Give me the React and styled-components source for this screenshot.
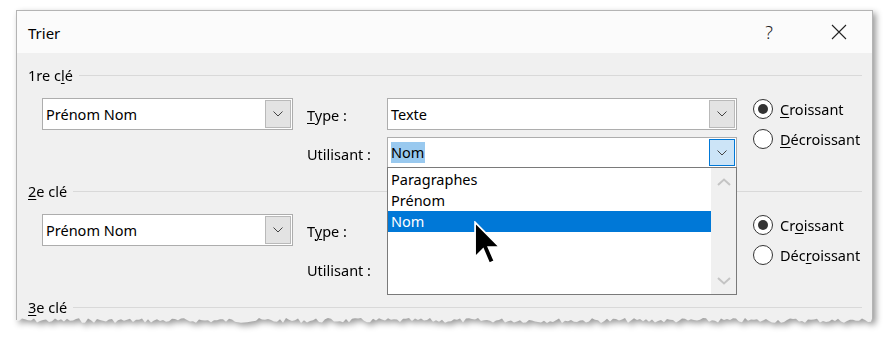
import React from 'react';
import styled, { createGlobalStyle } from 'styled-components';

const GlobalStyle = createGlobalStyle`
	body {
		margin: 0;
		background: #ffffff;
		font-family: 'Noto Sans', 'Open Sans', sans-serif;
		color: #000;
	}
`;

const Page = styled.div`
	padding: 10px 0 0 16px;
	height: 330px;
	overflow: hidden;
`;

const Dialog = styled.div`
	width: 857px;
	filter: drop-shadow(3px 3px 3px rgba(0, 0, 0, 0.4));
`;

const Frame = styled.div`
	border: 1px solid #b4b4b4;
	border-bottom: none;
	background: #f0f0f0;
`;

const TitleBar = styled.div`
	height: 42px;
	background: #fbfbfb;
	display: flex;
	align-items: center;
	padding: 0 25px 0 11px;
	font-size: 15px;
`;

const Title = styled.div`
	flex: 1;
	padding-top: 1px;
`;

const Help = styled.div`
	font-size: 18px;
	font-weight: 300;
	color: #222;
	margin-right: 58px;
`;

const Body = styled.div`
	padding: 13px 10px 0 11px;
	display: flex;
	flex-direction: column;
	gap: 13px;
	font-size: 14.5px;
`;

const Section = styled.div`
	display: flex;
	flex-direction: column;
	gap: 14px;
`;

const Header = styled.div`
	height: 18px;
	display: flex;
	align-items: center;
	gap: 6px;
	line-height: 18px;

	&::after {
		content: '';
		flex: 1;
		height: 1px;
		background: #d9d9d9;
		margin-top: 1px;
	}
`;

const Acc = styled.span`
	text-decoration: underline;
	text-underline-offset: 2px;
	text-decoration-thickness: 1px;
`;

const Rows = styled.div`
	display: grid;
	grid-template-columns: 251px 94px 350px 1fr;
	grid-template-rows: 32px 32px;
	row-gap: 7px;
	padding-left: 14px;
`;

const Label = styled.div`
	grid-column: 2;
	grid-row: ${(p) => p.row};
	display: flex;
	align-items: center;
	padding-left: 14px;
	padding-top: 1px;
`;

const Combo = styled.div`
	grid-column: ${(p) => p.col};
	grid-row: ${(p) => p.row};
	position: relative;
	box-sizing: border-box;
	height: ${(p) => (p.short ? 31 : 32)}px;
	border: 1px solid #adadad;
	background: #fff;
	display: flex;
	align-items: center;
	z-index: ${(p) => (p.open ? 2 : 'auto')};
`;

const ComboText = styled.div`
	flex: 1;
	padding-left: 3px;
	display: flex;
	align-items: center;
`;

const Selected = styled.span`
	background: #99c9ef;
	line-height: 21px;
	padding-right: 1px;
`;

const DropButton = styled.div`
	box-sizing: border-box;
	width: 26px;
	align-self: stretch;
	margin: 1px;
	border: 1px solid ${(p) => (p.focused ? '#0078d7' : '#b9b9b9')};
	background: ${(p) => (p.focused ? '#cce4f7' : '#e3e3e3')};
	display: flex;
	align-items: center;
	justify-content: center;
`;

const List = styled.div`
	position: absolute;
	top: 100%;
	left: -1px;
	width: 350px;
	height: 128px;
	box-sizing: border-box;
	border: 1px solid #7a7a7a;
	background: #fff;
	display: flex;
`;

const Items = styled.div`
	flex: 1;
	padding-top: 1px;
	position: relative;
`;

const Item = styled.div`
	height: 21px;
	line-height: 21px;
	padding-left: 3px;
	background: ${(p) => (p.active ? '#0078d7' : 'transparent')};
	color: ${(p) => (p.active ? '#fff' : '#000')};
`;

const Scrollbar = styled.div`
	width: 25px;
	background: #f0f0f0;
	display: flex;
	flex-direction: column;
	justify-content: space-between;
	align-items: center;
	padding: 10px 0 9px;
`;

const Cursor = styled.svg`
	position: absolute;
	left: 86px;
	top: 53px;
`;

const Radios = styled.div`
	grid-column: 4;
	grid-row: 1 / span 2;
	display: flex;
	flex-direction: column;
	gap: 11px;
	padding: 1px 0 0 16px;
`;

const Radio = styled.div`
	display: flex;
	align-items: center;
	gap: 7px;
	height: 19px;
`;

const Circle = styled.span`
	box-sizing: border-box;
	width: 20px;
	height: 20px;
	border-radius: 50%;
	border: 1px solid #333;
	background: #fff;
	display: flex;
	align-items: center;
	justify-content: center;

	&::after {
		content: '';
		display: ${(p) => (p.checked ? 'block' : 'none')};
		width: 10px;
		height: 10px;
		border-radius: 50%;
		background: #333;
	}
`;

const Torn = styled.svg`
	display: block;
`;

function Chevron() {
	return (
		<svg width='10' height='6' viewBox='0 0 10 6'>
			<polyline points='0.5,0.5 5,5 9.5,0.5' fill='none' stroke='#444' strokeWidth='1' />
		</svg>
	);
}

function ScrollArrow({ up }) {
	return (
		<svg width='14' height='8' viewBox='0 0 14 8'>
			<polyline
				points={up ? '1,7 7,1.5 13,7' : '1,1 7,6.5 13,1'}
				fill='none'
				stroke='#c4c4c4'
				strokeWidth='2'
			/>
		</svg>
	);
}

function ComboBox({ col, row, text, children, focused, open, short }) {
	return (
		<Combo col={col} row={row} open={open} short={short}>
			<ComboText>{text}</ComboText>
			<DropButton focused={focused}>
				<Chevron />
			</DropButton>
			{children}
		</Combo>
	);
}

function DropList() {
	return (
		<List>
			<Items>
				<Item>Paragraphes</Item>
				<Item>Prénom</Item>
				<Item active>Nom</Item>
				<Cursor width='27' height='44' viewBox='0 0 12.4 20'>
					<polygon
						points='0.5,0.5 0.5,16.5 4.2,12.8 7,19.3 9.4,18.3 6.6,11.9 11.8,11.9'
						fill='#000'
						stroke='#fff'
						strokeWidth='0.8'
						strokeLinejoin='miter'
					/>
				</Cursor>
			</Items>
			<Scrollbar>
				<ScrollArrow up />
				<ScrollArrow />
			</Scrollbar>
		</List>
	);
}

function RadioGroup({ asc, desc }) {
	return (
		<Radios>
			<Radio>
				<Circle checked />
				<span>{asc}</span>
			</Radio>
			<Radio>
				<Circle />
				<span>{desc}</span>
			</Radio>
		</Radios>
	);
}

function tornPoints(width, height) {
	const pts = [`0,0`];
	let seed = 7;
	for (let x = 0; x <= width; x += 3) {
		seed = (seed * 9301 + 49297) % 233280;
		const r = seed / 233280;
		const y = 2 + r * (height - 3);
		pts.push(`${x},${y.toFixed(1)}`);
	}
	pts.push(`${width},0`);
	return pts.join(' ');
}

export default function App() {
	return (
		<>
			<GlobalStyle />
			<Page>
				<Dialog>
					<Frame>
						<TitleBar>
							<Title>Trier</Title>
							<Help>?</Help>
							<svg width='16' height='16' viewBox='0 0 16 16'>
								<path d='M1 1 L15 15 M15 1 L1 15' stroke='#222' strokeWidth='1.1' />
							</svg>
						</TitleBar>
						<Body>
							<Section>
								<Header>
									<span>1re c<Acc>l</Acc>é</span>
								</Header>
								<Rows>
									<ComboBox col={1} row={1} text='Prénom Nom' />
									<Label row={1}><span><Acc>T</Acc>ype :</span></Label>
									<Label row={2}>Utilisant :</Label>
									<ComboBox col={3} row={1} text='Texte' />
									<ComboBox
										col={3}
										row={2}
										short
										focused
										open
										text={<Selected>Nom</Selected>}
									>
										<DropList />
									</ComboBox>
									<RadioGroup
										asc={<><Acc>C</Acc>roissant</>}
										desc={<><Acc>D</Acc>écroissant</>}
									/>
								</Rows>
							</Section>
							<Section>
								<Header>
									<span><Acc>2</Acc>e clé</span>
								</Header>
								<Rows>
									<ComboBox col={1} row={1} text='Prénom Nom' />
									<Label row={1}><span>T<Acc>y</Acc>pe :</span></Label>
									<Label row={2}>Utilisant :</Label>
									<RadioGroup
										asc={<>Cr<Acc>o</Acc>issant</>}
										desc={<>Déc<Acc>r</Acc>oissant</>}
									/>
								</Rows>
							</Section>
							<Section>
								<Header>
									<span><Acc>3</Acc>e clé</span>
								</Header>
							</Section>
						</Body>
					</Frame>
					<Torn width='857' height='8' viewBox='0 0 857 8'>
						<polygon points={tornPoints(857, 8)} fill='#f0f0f0' />
						<line x1='0.5' y1='0' x2='0.5' y2='4' stroke='#b4b4b4' />
						<line x1='856.5' y1='0' x2='856.5' y2='4' stroke='#b4b4b4' />
					</Torn>
				</Dialog>
			</Page>
		</>
	);
}
